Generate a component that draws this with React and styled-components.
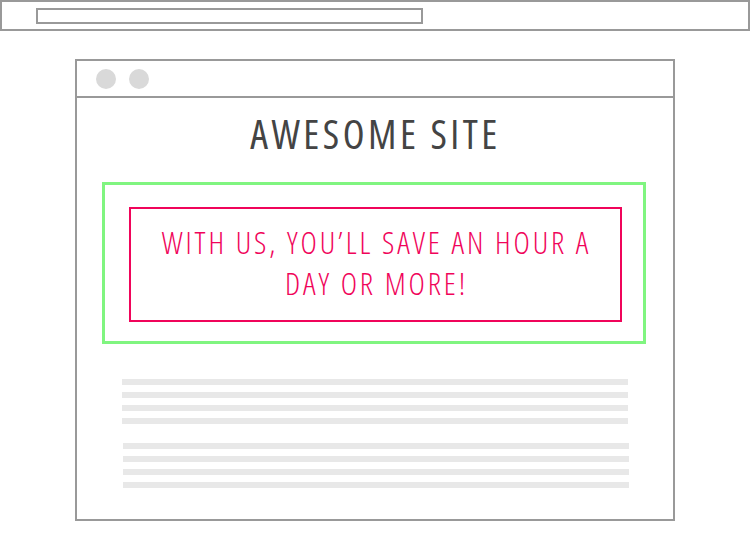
import React from "react";
import styled, { createGlobalStyle } from "styled-components";

const GlobalStyle = createGlobalStyle`
  body {
    margin: 0;
    background: #fff;
    font-family: "Open Sans", "DejaVu Sans Condensed", sans-serif;
  }
`;

const lineGroups = [
  { shift: 0, count: 4 },
  { shift: 1, count: 4 },
];

function App() {
  return (
    <Page>
      <GlobalStyle />
      <AddressBar>
        <UrlField />
      </AddressBar>

      <BrowserWindow>
        <TitleBar>
          <Dot />
          <Dot />
        </TitleBar>

        <SiteTitle>AWESOME SITE</SiteTitle>

        <OuterFrame>
          <HeadlineBox>
            <Headline>
              WITH US, YOU’LL SAVE AN HOUR A
              <br />
              DAY OR MORE!
            </Headline>
          </HeadlineBox>
        </OuterFrame>

        <Body>
          {lineGroups.map((group, i) => (
            <LineGroup key={i} $shift={group.shift}>
              {Array.from({ length: group.count }).map((_, j) => (
                <TextLine key={j} />
              ))}
            </LineGroup>
          ))}
        </Body>
      </BrowserWindow>
    </Page>
  );
}

export default App;

const Page = styled.div`
  width: 750px;
  height: 550px;
  display: flex;
  flex-direction: column;
`;

const AddressBar = styled.div`
  box-sizing: border-box;
  width: 750px;
  height: 31px;
  border: 2px solid #999;
  padding: 6px 0 0 34px;
`;

const UrlField = styled.div`
  box-sizing: border-box;
  width: 387px;
  height: 16px;
  border: 2px solid #999;
`;

const BrowserWindow = styled.div`
  box-sizing: border-box;
  width: 600px;
  height: 462px;
  margin: 28px 0 0 75px;
  border: 2px solid #999;
  display: flex;
  flex-direction: column;
`;

const TitleBar = styled.div`
  height: 35px;
  border-bottom: 2px solid #999;
  display: flex;
  align-items: center;
  gap: 13px;
  padding-left: 19px;
`;

const Dot = styled.span`
  width: 20px;
  height: 20px;
  border-radius: 50%;
  background: #d9d9d9;
`;

const SiteTitle = styled.h1`
  margin: 0;
  height: 84px;
  display: flex;
  align-items: center;
  justify-content: center;
  padding: 0 0 14px 1px;
  box-sizing: border-box;
  font-size: 40px;
  font-weight: 400;
  font-stretch: 75%;
  letter-spacing: 3.5px;
  color: #444;
`;

const OuterFrame = styled.div`
  box-sizing: border-box;
  width: 544px;
  height: 162px;
  margin-left: 25px;
  border: 3px solid #80f580;
  padding: 22px 21px 19px 24px;
`;

const HeadlineBox = styled.div`
  box-sizing: border-box;
  height: 100%;
  border: 2px solid #f0045a;
  display: flex;
  align-items: center;
  justify-content: center;
  padding: 0 0 3px 2px;
`;

const Headline = styled.p`
  margin: 0;
  text-align: center;
  font-size: 31px;
  font-weight: 300;
  line-height: 41px;
  font-stretch: 75%;
  letter-spacing: 2.9px;
  color: #f0045a;
`;

const Body = styled.div`
  display: flex;
  flex-direction: column;
  gap: 19px;
  padding: 35px 45px 0 45px;
`;

const LineGroup = styled.div`
  display: flex;
  flex-direction: column;
  gap: 7px;
  margin: 0 ${(p) => -p.$shift}px 0 ${(p) => p.$shift}px;
`;

const TextLine = styled.div`
  height: 6px;
  background: #e8e8e8;
`;
